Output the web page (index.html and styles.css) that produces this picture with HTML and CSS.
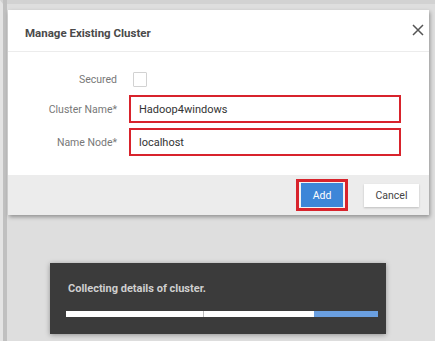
FILE: index.html
```html
<!DOCTYPE html>
<html lang="en">
<head>
  <meta charset="UTF-8" />
  <title>Manage Existing Cluster</title>
  <link rel="stylesheet" href="styles.css">
</head>
<body>
  <div class="screen">
    <div class="dialog">
      <div class="dialog-header">
        <span class="dialog-title">Manage Existing Cluster</span>
        <svg class="close" width="12" height="12" viewBox="0 0 12 12">
          <path d="M1 1 L11 11 M11 1 L1 11" stroke="#555" stroke-width="1.5" fill="none" />
        </svg>
      </div>
      <div class="dialog-body">
        <div class="row row-check">
          <label>Secured</label>
          <span class="checkbox"></span>
        </div>
        <div class="row">
          <label>Cluster Name*</label>
          <div class="field">Hadoop4windows</div>
        </div>
        <div class="row">
          <label>Name Node*</label>
          <div class="field">localhost</div>
        </div>
      </div>
      <div class="dialog-footer">
        <div class="highlight">
          <button class="btn-add">Add</button>
        </div>
        <button class="btn-cancel">Cancel</button>
      </div>
    </div>

    <div class="toast">
      <div class="toast-text">Collecting details of cluster.</div>
      <div class="progress">
        <div class="progress-done"><span class="tick"></span></div>
        <div class="progress-left"></div>
      </div>
    </div>
  </div>
</body>
</html>
```

FILE: styles.css
```css
body {
  margin: 0;
  padding: 0;
  font-family: Roboto, 'Liberation Sans', sans-serif;
  background: #dcdcdc;
}
.screen {
  width: 435px;
  height: 341px;
  box-sizing: border-box;
  background: #dedede;
  border-top: 4px solid #d2d2d2;
  border-left: 3px solid #e4e4e4;
  padding: 6px 0 0 0;
  position: relative;
}
.screen::before {
  content: "";
  position: absolute;
  left: 0;
  top: -4px;
  width: 4px;
  height: 341px;
  background: #c0c0c0;
}
.dialog {
  margin-left: 5px;
  width: 421px;
  background: #fff;
  box-shadow: 1px 2px 4px rgba(0, 0, 0, 0.35);
  position: relative;
}
.dialog-header {
  height: 41px;
  border-bottom: 1px solid #ececec;
  display: flex;
  align-items: center;
  justify-content: space-between;
  padding: 0 5px 0 17px;
}
.dialog-title {
  font-weight: bold;
  font-size: 11.5px;
  color: #4a4a4a;
  margin-top: 5px;
}
.close {
  margin-top: -1px;
}
.dialog-body {
  padding: 14px 0 19px 0;
}
.row {
  display: grid;
  grid-template-columns: 109px 272px;
  column-gap: 12px;
  align-items: center;
  margin-top: 5px;
}
.row-check {
  margin-top: 0;
  height: 26px;
  margin-bottom: -2px;
}
.row label {
  text-align: right;
  font-size: 10.5px;
  color: #787878;
}
.checkbox {
  display: block;
  width: 12px;
  height: 13px;
  border: 1px solid #d2d2d2;
  border-radius: 1px;
  margin-left: 4px;
}
.field {
  height: 28px;
  box-sizing: border-box;
  border: 2px solid #d8232c;
  padding-left: 8px;
  display: flex;
  align-items: center;
  font-size: 11px;
  color: #333;
}
.dialog-footer {
  height: 40px;
  background: #ececec;
  display: flex;
  align-items: center;
  justify-content: flex-end;
  padding-right: 10px;
  gap: 16px;
}
.highlight {
  border: 3px solid #d8232c;
  padding: 1px 2px;
  background: #f4f4f4;
  display: flex;
}
button {
  font-family: Roboto, 'Liberation Sans', sans-serif;
  font-size: 10.5px;
  border: none;
  cursor: pointer;
}
.btn-add {
  width: 42px;
  height: 24px;
  background: #3d86d8;
  color: #fff;
}
.btn-cancel {
  width: 55px;
  height: 23px;
  background: #fff;
  color: #444;
  box-shadow: 0 1px 2px rgba(0, 0, 0, 0.2);
}
.toast {
  margin: 48px 0 0 47px;
  width: 336px;
  height: 71px;
  box-sizing: border-box;
  background: #3b3b3b;
  box-shadow: 0 1px 5px rgba(0, 0, 0, 0.35);
  padding: 19px 8px 0 16px;
}
.toast-text {
  font-weight: bold;
  font-size: 11px;
  color: #cfcfcf;
  padding-left: 2px;
}
.progress {
  margin-top: 16px;
  height: 6px;
  display: flex;
}
.progress-done {
  width: 248px;
  background: #fff;
  position: relative;
}
.tick {
  position: absolute;
  left: 137px;
  top: 0;
  width: 1px;
  height: 6px;
  background: #bbb;
}
.progress-left {
  flex: 1;
  background: #6a9fe0;
}
```
